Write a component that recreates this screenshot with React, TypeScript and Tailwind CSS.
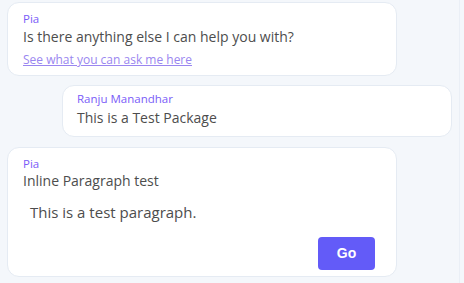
import React from "react";

const font = { fontFamily: '"Open Sans", "Noto Sans", sans-serif' };

function Card({ className, children }: { className: string; children: React.ReactNode }) {
  return (
    <div className={`bg-white border border-[#e5ebf3] rounded-[12px] ${className}`}>{children}</div>
  );
}

export default function App() {
  return (
    <div className="w-[464px] h-[283px] bg-[#f4f7fb] flex overflow-hidden" style={font}>
      <div className="w-[460px] flex flex-col px-[7px] pt-[2px] border-r border-[#eaeff6]">
        <Card className="w-[390px] h-[74px] px-[15px] pt-[9px]">
          <div className="text-[11.5px] leading-[14px] text-[#7a5cf8]">Pia</div>
          <div className="text-[14px] leading-[20px] text-[#4d4d4d] mt-[1px]">Is there anything else I can help you with?</div>
          <div className="text-[12px] leading-[14px] text-[#9a86f0] underline mt-[6px]">See what you can ask me here</div>
        </Card>
        <Card className="self-end w-[390px] h-[52px] px-[14px] pt-[6px] mt-[9px]">
          <div className="text-[11.5px] leading-[14px] text-[#7a5cf8]">Ranju Manandhar</div>
          <div className="text-[14px] leading-[20px] text-[#4d4d4d] mt-[2px]">This is a Test Package</div>
        </Card>
        <Card className="w-[390px] h-[130px] px-[15px] pt-[9px] mt-[10px] flex flex-col">
          <div className="text-[11.5px] leading-[14px] text-[#7a5cf8]">Pia</div>
          <div className="text-[14px] leading-[20px] text-[#4d4d4d]">Inline Paragraph test</div>
          <div className="text-[15px] leading-[20px] text-[#4d4d4d] mt-[11px] pl-[7px]">This is a test paragraph.</div>
          <div className="flex justify-end mt-[15px] pr-[6px]">
            <button
              className="w-[57px] h-[33px] rounded-[4px] bg-[#635bf8] text-white text-[14px] font-bold"
              style={{ fontFamily: '"Liberation Sans", Arial, sans-serif' }}
            >
              Go
            </button>
          </div>
        </Card>
      </div>
    </div>
  );
}
